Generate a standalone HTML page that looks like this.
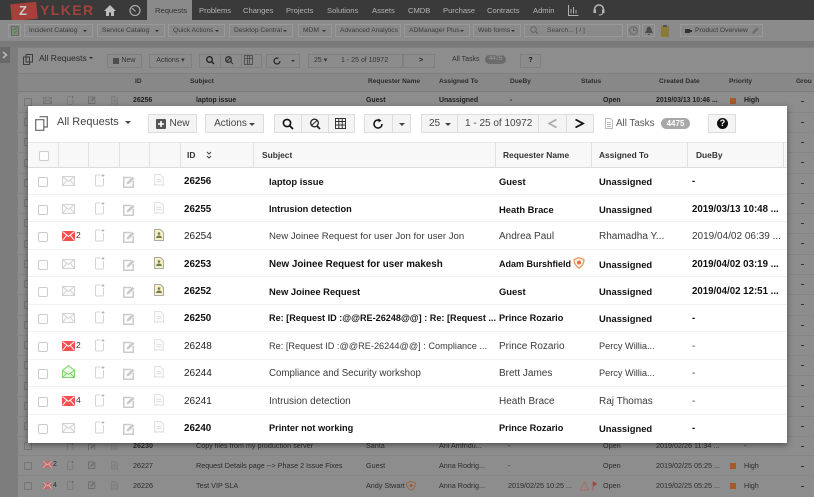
<!DOCTYPE html>
<html><head><meta charset="utf-8"><style>
html,body{margin:0;padding:0;width:814px;height:497px;overflow:hidden;background:#7d7d7d}
body{font-family:"Liberation Sans",sans-serif;position:relative;filter:blur(.3px)}
div,span,svg{position:absolute;white-space:nowrap;box-sizing:border-box}
.n{top:5px;font-size:7.6px;color:#b4b4b4;line-height:11px}
.tb{top:24px;height:13px;border:1px solid #999;background:#8a8a8a;font-size:6.7px;color:#3a3a3a;line-height:11px;padding-left:4px}
.tb i{position:absolute;right:5px;top:5px;border:2px solid transparent;border-top:2px solid #333;border-bottom:0}
.bb{top:54px;height:14px;border:1px solid #7f7f7f;background:#8c8c8c;font-size:7px;color:#333;line-height:12px;text-align:center}
.bh{top:77px;font-size:6.6px;font-weight:bold;color:#2c2c2c;line-height:10px}
.bt{font-size:7.2px;color:#2c2c2c;line-height:10px}
.bb2{font-size:6.9px;font-weight:bold;color:#1f1f1f;line-height:10px}
.b{background:#f4f4f4;border:1px solid #ddd;height:19px;top:114px;font-size:10px;color:#444;line-height:17px;text-align:center}
.th{top:149px;font-size:8.4px;font-weight:bold;color:#333;line-height:12px}
.r{left:28px;width:759px;height:27.5px;border-bottom:1px solid #f1f1f1}
.r span{top:8px;font-size:10px;line-height:13px;color:#3a3a3a}
.r span.I{left:156px;color:#222}
.r span.S{left:241px}.r span.Q{left:471px}.r span.A{left:571px}.r span.D{left:664px}
.r span.N{left:48px;top:7px;font-size:8.5px;color:#333}
.r.B span{font-weight:bold;color:#111;font-size:9.4px}
.r.B span.I{font-size:9.8px}
.r.B span.D{font-size:9.7px}
.c{left:10px;top:10px;width:10px;height:10px;border:1px solid #ccc;border-radius:2px;background:#fff}
.e{left:34px;top:9px}.o{left:67px;top:7px}.p{left:95px;top:9px}.d{left:126px;top:7px}
.cb{width:8px;height:8px;border:1px solid #757575;border-radius:1px;left:24px}
.ln{left:17px;width:12px;height:1px;background:#858585}
.ln2{left:787px;width:27px;height:1px;background:#858585}
.ds{left:801px;width:3px;height:1px;background:#333}
.dv{width:1px;background:#e2e2e2}
.g{filter:brightness(.55)}
</style></head><body>
<svg width="0" height="0" style="left:0;top:0"><defs>
<g id="env"><rect x=".5" y=".5" width="12" height="9" fill="#fafafa" stroke="#d2d2d2"/><path d="M.5 .5L6.500 5.500 12.500 .5M.5 9.500L4.500 4.500M12.500 9.500L8.500 4.500" fill="none" stroke="#d2d2d2"/></g>
<g id="red"><rect x="0" y="0" width="13" height="10" fill="#f45050"/><path d="M.5 .5L6.500 5.500 12.500 .5M.5 9.500L4.500 4.500M12.500 9.500L8.500 4.500" fill="none" stroke="#fff"/></g>
<g id="grn"><path d="M.5 5.500L6.500 .5 12.500 5.500V12.500H.5Z" fill="#eaf8e4" stroke="#7fd16a"/><path d="M.5 5.500L6.500 9.500 12.500 5.500M.5 12.500L5 8M12.500 12.500L8 8" fill="none" stroke="#7fd16a"/></g>
<g id="not"><path d="M5.500 1H1.500Q.5 1 .5 2V11Q.5 12 1.500 12H7Q8.500 12 8.500 10.500V4" fill="none" stroke="#d4d4d4"/><path d="M8 0V3M6.500 1.500H9.500" stroke="#aaa" stroke-width=".8"/></g>
<g id="edt"><path d="M8 1.500H.8V11.200H10.200V5" fill="none" stroke="#cacaca" stroke-width="1.500"/><path d="M3.500 8.500L4.200 6 9.500 .7 11.500 2.700 6 8Z" fill="#cacaca"/></g>
<g id="doc"><path d="M.5 .5H6.500L9.500 3.500V11.500L8 10.500 6.500 11.500 5 10.500 3.500 11.500 2 10.500 .5 11.500Z" fill="#fbfbfb" stroke="#e2e2e2"/><path d="M2.500 5.500H7.500M2.500 7.500H7.500" stroke="#e2e2e2"/></g>
<g id="pdf"><path d="M.5 .5H6.500L9.500 3.500V11.500H.5Z" fill="#f7f0c0" stroke="#aaa"/><path d="M5 3.200A1.300 1.300 0 1 1 5 5.800A1.300 1.300 0 1 1 5 3.200ZM2 9Q2.500 6.500 5 6.500T8 9Z" fill="#6d7f58"/></g>
</defs></svg>

<!-- top nav -->
<div style="left:0;top:0;width:814px;height:20px;background:#3a3a3a"></div>
<div style="left:11px;top:3px;width:26px;height:17px;background:#a5403a;transform:rotate(-6deg)"></div>
<div style="left:19px;top:4px;font-size:13px;font-weight:bold;color:#c9c9c9;line-height:14px">Z</div>
<div style="left:40px;top:3px;font-size:14px;font-weight:bold;color:#a5403a;line-height:15px;letter-spacing:1.400px">YLKER</div>
<svg style="left:104px;top:5px" width="12" height="11" viewBox="0 0 12 11"><path d="M6 0L12 6H10V11H7V7.500H5V11H2V6H0Z" fill="#bdbdbd"/></svg>
<svg style="left:129px;top:5px" width="12" height="11" viewBox="0 0 12 11"><circle cx="6" cy="5.500" r="5" fill="none" stroke="#aaa" stroke-width="1.200"/><path d="M3 3L6.500 6.500" stroke="#aaa" stroke-width="1.200"/></svg>
<div style="left:147px;top:0;width:45px;height:21px;background:#8a8a8a"></div>
<div class="n" style="left:155px;color:#333">Requests</div>
<div class="n" style="left:199px">Problems</div>
<div class="n" style="left:243px">Changes</div>
<div class="n" style="left:286px">Projects</div>
<div class="n" style="left:327px">Solutions</div>
<div class="n" style="left:372px">Assets</div>
<div class="n" style="left:408px">CMDB</div>
<div class="n" style="left:443px">Purchase</div>
<div class="n" style="left:487px">Contracts</div>
<div class="n" style="left:533px">Admin</div>
<svg style="left:568px;top:5px" width="11" height="11" viewBox="0 0 11 11"><path d="M.5 0V10.500H10.500M3 4V8.500M5.500 2V8.500M8 5V8.500" fill="none" stroke="#b0b0b0"/></svg>
<svg style="left:593px;top:4px" width="12" height="12" viewBox="0 0 12 12"><path d="M1.500 7V5.500A4.500 4.500 0 0 1 10.500 5.500V7" fill="none" stroke="#b5b5b5" stroke-width="1.500"/><rect x="0.500" y="5.500" width="2.500" height="3.500" fill="#b5b5b5"/><rect x="9" y="5.500" width="2.500" height="3.500" fill="#b5b5b5"/><path d="M10 9Q9 11 6 11" fill="none" stroke="#b5b5b5"/></svg>

<!-- toolbar -->
<div style="left:0;top:20px;width:814px;height:21px;background:#8b8b8b"></div>
<div style="left:0;top:41px;width:814px;height:6px;background:#7a7a7a"></div>
<div class="tb" style="left:8px;width:13px"></div>
<svg style="left:11px;top:26px" width="8" height="10" viewBox="0 0 8 10"><path d="M.5 .5H7.500V9.500H.5Z" fill="#7d8a78" stroke="#6a6a6a"/><path d="M2 4L6 2M3 7L6 5" stroke="#4f7a4a"/></svg>
<div class="tb" style="left:24px;width:69px">Incident Catalog<i></i></div>
<div class="tb" style="left:97px;width:68px">Service Catalog<i></i></div>
<div class="tb" style="left:168px;width:57px">Quick Actions<i></i></div>
<div class="tb" style="left:229px;width:64px">Desktop Central<i></i></div>
<div class="tb" style="left:298px;width:34px">MDM<i></i></div>
<div class="tb" style="left:335px;width:66px">Advanced Analytics</div>
<div class="tb" style="left:404px;width:66px">ADManager Plus<i></i></div>
<div class="tb" style="left:473px;width:48px">Web forms<i></i></div>
<div class="tb" style="left:524px;width:99px;padding-left:22px;color:#444">Search... [ / ]</div>
<svg style="left:530px;top:26px" width="9" height="9" viewBox="0 0 9 9"><circle cx="3.500" cy="3.500" r="2.800" fill="none" stroke="#666"/><path d="M5.500 5.500L8 8" stroke="#666"/></svg>
<div class="tb" style="left:627px;width:13px"></div><div class="tb" style="left:642px;width:13px"></div>
<svg style="left:629px;top:26px" width="9" height="9" viewBox="0 0 9 9"><circle cx="4.500" cy="4.500" r="3.800" fill="none" stroke="#666"/><path d="M4.500 2V4.500H7" stroke="#666" fill="none"/></svg>
<svg style="left:645px;top:26px" width="8" height="9" viewBox="0 0 8 9"><path d="M4 .5Q6.500 1 6.500 4L8 7H0L1.500 4Q1.500 1 4 .5ZM3 8H5V9H3Z" fill="#4c4c4c"/></svg>
<svg style="left:661px;top:25px" width="8" height="12" viewBox="0 0 8 12"><rect width="8" height="11" y="1" fill="#8a7a3c"/><rect x="2" width="4" height="2" fill="#555"/></svg>
<div class="tb" style="left:680px;width:83px;padding-left:14px">Product Overview</div>
<div style="left:685px;top:29px;width:5px;height:4px;background:#333"></div>
<div style="left:690px;top:30px;width:2px;height:2px;background:#333"></div>
<svg style="left:752px;top:27px" width="7" height="7" viewBox="0 0 7 7"><path d="M0 7L1 4.500 5 .5 6.500 2 2.500 6Z" fill="#6a6a6a"/></svg>

<!-- background panel -->
<div style="left:0;top:47px;width:10px;height:16px;background:#696969"></div>
<svg style="left:2px;top:51px" width="6" height="8" viewBox="0 0 6 8"><path d="M1 1L4.500 4 1 7" fill="none" stroke="#bbb" stroke-width="1.500"/></svg>
<div style="left:17px;top:47px;width:797px;height:450px;background:#8d8d8d;border-left:1px solid #7f7f7f;border-top:1px solid #7f7f7f"></div>
<div style="left:18px;top:73px;width:796px;height:19px;background:#888;border-top:1px solid #7f7f7f;border-bottom:1px solid #7b7b7b"></div>
<svg style="left:23px;top:54px" width="10" height="11" viewBox="0 0 10 11"><path d="M3 .5H9.500V8H3ZM.5 3H6.500V10.500H.5Z" fill="none" stroke="#3f3f3f"/></svg>
<div style="left:39px;top:53px;font-size:8.500px;color:#2a2a2a;line-height:11px">All Requests</div>
<div style="left:89px;top:57px;border:2px solid transparent;border-top:2px solid #2a2a2a"></div>
<div class="bb" style="left:107px;width:35px;padding-left:8px">New</div>
<div style="left:113px;top:58px;width:6px;height:6px;background:#4e4e4e"></div>
<div class="bb" style="left:149px;width:43px">Actions ▾</div>
<div class="bb" style="left:199px;width:63px"></div>
<div class="dv" style="left:220px;top:54px;height:14px;background:#7f7f7f"></div><div class="dv" style="left:241px;top:54px;height:14px;background:#7f7f7f"></div>
<svg style="left:205px;top:55px" width="50" height="12" viewBox="0 0 50 12"><circle cx="4.500" cy="4.500" r="2.800" fill="none" stroke="#222" stroke-width="1.300"/><path d="M6.500 6.500L9 9" stroke="#222" stroke-width="1.300"/><circle cx="23.500" cy="4.500" r="2.800" fill="none" stroke="#333" stroke-width="1.300"/><path d="M25.500 6.500L28 9M21 7L26 2" stroke="#333"/><path d="M39.500 .5H47.500V9.500H39.500ZM39.500 3.500H47.500M42.500 .5V9.500M44.500 .5V9.500" fill="none" stroke="#444" stroke-width=".8"/></svg>
<div class="bb" style="left:266px;width:34px"></div>
<svg style="left:272px;top:56px" width="10" height="10" viewBox="0 0 10 10"><path d="M8 5A3 3 0 1 1 6.500 2.400" fill="none" stroke="#222" stroke-width="1.200"/></svg>
<div style="left:291px;top:60px;border:2px solid transparent;border-top:2px solid #333"></div>
<div class="bb" style="left:308px;width:95px;text-align:left;padding-left:5px">25 ▾ <span style="left:32px;top:0">1 - 25 of 10972</span></div>
<div class="bb" style="left:403px;width:32px;color:#222"><span style="left:15px;top:0;font-weight:bold">&gt;</span></div>
<div style="left:452px;top:54px;font-size:7px;color:#333;line-height:12px">All Tasks</div>
<div style="left:485px;top:55px;width:21px;height:9px;background:#6b6b6b;border-radius:5px;font-size:6px;color:#a0a0a0;text-align:center;line-height:9px">4475</div>
<div class="bb" style="left:520px;width:21px;font-weight:bold;color:#111">?</div>
<div class="bh" style="left:135px">ID</div><div class="bh" style="left:190px">Subject</div>
<div class="bh" style="left:368px">Requester Name</div>
<div class="bh" style="left:439px">Assigned To</div><div class="bh" style="left:510px">DueBy</div>
<div class="bh" style="left:581px">Status</div><div class="bh" style="left:659px">Created Date</div>
<div class="bh" style="left:729px">Priority</div><div class="bh" style="left:796px">Grou</div>

<svg class="g" style="left:43px;top:97px" width="9" height="7" viewBox="0 0 13 10"><use href="#env"/></svg>
<svg class="g" style="left:67px;top:96px" width="7" height="9" viewBox="0 0 10 13"><use href="#not"/></svg>
<svg class="g" style="left:88px;top:96px" width="8" height="8" viewBox="0 0 12 12"><use href="#edt"/></svg>
<svg class="g" style="left:111px;top:96px" width="7" height="9" viewBox="0 0 10 12"><use href="#doc"/></svg>
<div class="bb2" style="left:133px;top:96px">26256</div>
<div class="bb2" style="left:196px;top:96px">laptop issue</div>
<div class="bb2" style="left:366px;top:96px">Guest</div>
<div class="bb2" style="left:439px;top:96px">Unassigned</div>
<div class="bb2" style="left:510px;top:96px">-</div>
<div class="bb2" style="left:603px;top:96px">Open</div>
<div class="bb2" style="left:656px;top:96px">2019/03/13 10:46 ...</div>
<div style="left:730px;top:98px;width:6px;height:6px;background:#a85a26"></div>
<div class="bb2" style="left:744px;top:96px">High</div>

<svg class="g" style="left:67px;top:443px" width="7" height="7" viewBox="0 0 10 10"><use href="#not"/></svg>
<svg class="g" style="left:88px;top:443px" width="8" height="7" viewBox="0 0 12 10"><use href="#edt"/></svg>
<svg class="g" style="left:111px;top:443px" width="7" height="7" viewBox="0 0 10 10"><use href="#doc"/></svg>
<div class="bt" style="left:133px;top:441px;font-weight:bold">26230</div>
<div class="bt" style="left:196px;top:441px">Copy files from my production server</div>
<div class="bt" style="left:366px;top:441px">Santa</div>
<div class="bt" style="left:439px;top:441px">Ani Amfridu...</div>
<div class="bt" style="left:508px;top:441px">-</div>
<div class="bt" style="left:603px;top:441px">Open</div>
<div class="bt" style="left:656px;top:441px">2019/02/26 11:34 ...</div>
<div class="bt" style="left:744px;top:441px">-</div>

<svg style="left:43px;top:461px" width="9" height="7" viewBox="0 0 13 10"><use href="#red" opacity=".55"/></svg>
<div class="bt" style="left:53px;top:460px;font-size:7px">2</div>
<svg class="g" style="left:67px;top:461px" width="7" height="9" viewBox="0 0 10 13"><use href="#not"/></svg>
<svg class="g" style="left:88px;top:461px" width="8" height="8" viewBox="0 0 12 12"><use href="#edt"/></svg>
<svg class="g" style="left:111px;top:461px" width="7" height="9" viewBox="0 0 10 12"><use href="#doc"/></svg>
<div class="bt" style="left:133px;top:461px">26227</div>
<div class="bt" style="left:196px;top:461px">Request Details page --&gt; Phase 2 Issue Fixes</div>
<div class="bt" style="left:366px;top:461px">Guest</div>
<div class="bt" style="left:439px;top:461px">Anna Rodrig...</div>
<div class="bt" style="left:508px;top:461px">-</div>
<div class="bt" style="left:603px;top:461px">Open</div>
<div class="bt" style="left:656px;top:461px">2019/02/25 05:25 ...</div>
<div style="left:730px;top:463px;width:6px;height:6px;background:#a85a26"></div>
<div class="bt" style="left:744px;top:461px">High</div>

<svg style="left:43px;top:482px" width="9" height="7" viewBox="0 0 13 10"><use href="#red" opacity=".55"/></svg>
<div class="bt" style="left:53px;top:481px;font-size:7px">4</div>
<svg class="g" style="left:67px;top:481px" width="7" height="9" viewBox="0 0 10 13"><use href="#not"/></svg>
<svg class="g" style="left:88px;top:481px" width="8" height="8" viewBox="0 0 12 12"><use href="#edt"/></svg>
<svg class="g" style="left:111px;top:481px" width="7" height="9" viewBox="0 0 10 12"><use href="#doc"/></svg>
<div class="bt" style="left:133px;top:481px">26226</div>
<div class="bt" style="left:196px;top:481px">Test VIP SLA</div>
<div class="bt" style="left:366px;top:481px">Andy Stwart</div>
<svg style="left:406px;top:481px" width="10" height="10" viewBox="0 0 10 10"><path d="M5 .5L9.500 2Q9.500 7 5 9.500Q.5 7 .5 2Z" fill="none" stroke="#9a6a4a"/><circle cx="5" cy="4.500" r="1.500" fill="#a85a26"/></svg>
<div class="bt" style="left:439px;top:481px">Anna Rodrig...</div>
<div class="bt" style="left:508px;top:481px">2019/02/25 10:25 ...</div>
<svg style="left:580px;top:481px" width="18" height="10" viewBox="0 0 18 10"><path d="M4.500 1L8.500 9H.5Z" fill="none" stroke="#a87060"/><path d="M13 0V10M13.500 1L17 3 13.500 5Z" fill="#a5403a" stroke="#a5403a" stroke-width=".5"/></svg>
<div class="bt" style="left:603px;top:481px">Open</div>
<div class="bt" style="left:656px;top:481px">2019/02/25 05:25 ...</div>
<div style="left:730px;top:483px;width:6px;height:6px;background:#a85a26"></div>
<div class="bt" style="left:744px;top:481px">High</div>

<!-- edges of background rows -->
<div class="ln" style="top:112px"></div><div class="ln" style="top:132px"></div><div class="ln" style="top:152px"></div><div class="ln" style="top:173px"></div><div class="ln" style="top:193px"></div><div class="ln" style="top:213px"></div><div class="ln" style="top:233px"></div><div class="ln" style="top:254px"></div><div class="ln" style="top:274px"></div><div class="ln" style="top:294px"></div><div class="ln" style="top:315px"></div><div class="ln" style="top:335px"></div><div class="ln" style="top:355px"></div><div class="ln" style="top:375px"></div><div class="ln" style="top:396px"></div><div class="ln" style="top:416px"></div><div class="ln" style="top:436px"></div>
<div style="left:17px;top:455px;width:797px;height:1px;background:#858585"></div>
<div style="left:17px;top:475px;width:797px;height:1px;background:#858585"></div>
<div class="ln2" style="top:112px"></div><div class="ln2" style="top:132px"></div><div class="ln2" style="top:152px"></div><div class="ln2" style="top:173px"></div><div class="ln2" style="top:193px"></div><div class="ln2" style="top:213px"></div><div class="ln2" style="top:233px"></div><div class="ln2" style="top:254px"></div><div class="ln2" style="top:274px"></div><div class="ln2" style="top:294px"></div><div class="ln2" style="top:315px"></div><div class="ln2" style="top:335px"></div><div class="ln2" style="top:355px"></div><div class="ln2" style="top:375px"></div><div class="ln2" style="top:396px"></div><div class="ln2" style="top:416px"></div><div class="ln2" style="top:436px"></div>
<div class="ds" style="top:122px"></div><div class="ds" style="top:142px"></div><div class="ds" style="top:162px"></div><div class="ds" style="top:183px"></div><div class="ds" style="top:203px"></div><div class="ds" style="top:223px"></div><div class="ds" style="top:243px"></div><div class="ds" style="top:264px"></div><div class="ds" style="top:284px"></div><div class="ds" style="top:304px"></div><div class="ds" style="top:325px"></div><div class="ds" style="top:345px"></div><div class="ds" style="top:365px"></div><div class="ds" style="top:385px"></div><div class="ds" style="top:406px"></div><div class="ds" style="top:426px"></div><div class="ds" style="top:446px"></div><div class="ds" style="top:466px"></div><div class="ds" style="top:486px"></div><div class="ds" style="top:101px"></div>
<div class="cb" style="top:98px"></div><div class="cb" style="top:118px"></div><div class="cb" style="top:138px"></div><div class="cb" style="top:159px"></div><div class="cb" style="top:179px"></div><div class="cb" style="top:199px"></div><div class="cb" style="top:219px"></div><div class="cb" style="top:240px"></div><div class="cb" style="top:260px"></div><div class="cb" style="top:280px"></div><div class="cb" style="top:301px"></div><div class="cb" style="top:321px"></div><div class="cb" style="top:341px"></div><div class="cb" style="top:361px"></div><div class="cb" style="top:382px"></div><div class="cb" style="top:402px"></div><div class="cb" style="top:422px"></div><div class="cb" style="top:442px"></div><div class="cb" style="top:462px"></div><div class="cb" style="top:482px"></div>

<!-- modal -->
<div style="left:28px;top:106px;width:759px;height:337px;background:#fff;box-shadow:0 2px 6px rgba(0,0,0,.45)"></div>
<svg style="left:35px;top:116px" width="13" height="15" viewBox="0 0 13 15"><path d="M4.500 .7H12.300V11H9M.7 3.700H8.800V14.300H.7Z" fill="none" stroke="#666" stroke-width="1.200"/></svg>
<div style="left:57px;top:115px;font-size:11px;color:#444;line-height:14px">All Requests</div>
<div style="left:125px;top:121px;border:3px solid transparent;border-top:3px solid #444;border-bottom:0"></div>
<div class="b" style="left:148px;width:49px;padding-left:14px">New</div>
<svg style="left:156px;top:119px" width="10" height="10" viewBox="0 0 10 10"><rect width="10" height="10" rx="1" fill="#555"/><path d="M5 2V8M2 5H8" stroke="#fff" stroke-width="1.600"/></svg>
<div class="b" style="left:205px;width:59px;padding-right:8px">Actions</div>
<div style="left:249px;top:123px;border:3px solid transparent;border-top:3px solid #444;border-bottom:0"></div>
<div class="b" style="left:274px;width:81px"></div>
<div class="dv" style="left:301px;top:114px;height:19px;background:#ddd"></div><div class="dv" style="left:328px;top:114px;height:19px;background:#ddd"></div>
<svg style="left:282px;top:118px" width="12" height="12" viewBox="0 0 12 12"><circle cx="5" cy="5" r="3.600" fill="none" stroke="#111" stroke-width="1.600"/><path d="M7.500 7.500L11 11" stroke="#111" stroke-width="1.800"/></svg>
<svg style="left:309px;top:118px" width="12" height="12" viewBox="0 0 12 12"><circle cx="5.500" cy="5" r="3.800" fill="none" stroke="#222" stroke-width="1.300"/><path d="M8 8L11 11" stroke="#222" stroke-width="1.800"/><path d="M2 8L8 2.500" stroke="#222" stroke-width="1"/></svg>
<svg style="left:335px;top:118px" width="12" height="12" viewBox="0 0 12 12"><path d="M.5 .5H10.500V10.500H.5ZM.5 3.500H10.500M.5 7H10.500M3.800 .5V10.500M7.200 .5V10.500" fill="none" stroke="#333"/></svg>
<div class="b" style="left:364px;width:47px"></div>
<div class="dv" style="left:392px;top:114px;height:19px;background:#ddd"></div>
<svg style="left:372px;top:118px" width="12" height="12" viewBox="0 0 12 12"><path d="M10 6A4 4 0 1 1 7.500 2.300" fill="none" stroke="#111" stroke-width="1.500"/><path d="M6.500 .5L9.500 2.500 6.500 4.500Z" fill="#111"/></svg>
<div style="left:399px;top:123px;border:3px solid transparent;border-top:3px solid #444;border-bottom:0"></div>
<div class="b" style="left:421px;width:173px"></div>
<div class="dv" style="left:457px;top:114px;height:19px;background:#ddd"></div><div class="dv" style="left:538px;top:114px;height:19px;background:#ddd"></div><div class="dv" style="left:566px;top:114px;height:19px;background:#ddd"></div>
<div style="left:429px;top:117px;font-size:10px;line-height:13px;color:#444">25</div>
<div style="left:445px;top:123px;border:3px solid transparent;border-top:3px solid #444;border-bottom:0"></div>
<div style="left:465px;top:117px;font-size:10px;line-height:13px;color:#444">1 - 25 of 10972</div>
<svg style="left:547px;top:118px" width="11" height="11" viewBox="0 0 11 11"><path d="M9.500 1.500L2 5.500 9.500 9.500" fill="none" stroke="#aaa" stroke-width="1.600"/></svg>
<svg style="left:574px;top:118px" width="11" height="11" viewBox="0 0 11 11"><path d="M1.500 1.500L9 5.500 1.500 9.500" fill="none" stroke="#111" stroke-width="1.800"/></svg>
<svg style="left:605px;top:118px" width="8" height="11" viewBox="0 0 8 11"><path d="M.5 .5H5.500L7.500 2.500V10.500H.5ZM2 4.500H6M2 6.500H6M2 8.500H6" fill="none" stroke="#bbb"/></svg>
<div style="left:616px;top:117px;font-size:9.800px;line-height:13px;color:#555">All Tasks</div>
<div style="left:661px;top:118px;width:29px;height:11px;background:#a8a8a8;border-radius:6px;font-size:8px;font-weight:bold;color:#fff;text-align:center;line-height:11px">4475</div>
<div class="b" style="left:708px;width:28px"></div>
<div style="left:717px;top:118px;width:11px;height:11px;background:#111;border-radius:50%;color:#fff;font-size:9px;font-weight:bold;text-align:center;line-height:11px">?</div>

<div style="left:28px;top:142px;width:759px;height:26px;background:#f8f8f8;border-top:1px solid #e8e8e8;border-bottom:1px solid #ddd"></div>
<div class="dv" style="left:58px;top:142px;height:25px"></div><div class="dv" style="left:88px;top:142px;height:25px"></div><div class="dv" style="left:119px;top:142px;height:25px"></div><div class="dv" style="left:149px;top:142px;height:25px"></div><div class="dv" style="left:180px;top:142px;height:25px"></div><div class="dv" style="left:253px;top:142px;height:25px"></div><div class="dv" style="left:495px;top:142px;height:25px"></div><div class="dv" style="left:591px;top:142px;height:25px"></div><div class="dv" style="left:687px;top:142px;height:25px"></div><div class="dv" style="left:783px;top:142px;height:25px"></div>
<div style="left:39px;top:151px;width:10px;height:10px;border:1px solid #ccc;border-radius:2px;background:#fff"></div>
<div class="th" style="left:187px">ID</div>
<svg style="left:206px;top:151px" width="6" height="8" viewBox="0 0 6 8"><path d="M1 1L3 3 5 1M1 5L3 7 5 5" fill="none" stroke="#444"/></svg>
<div class="th" style="left:262px">Subject</div>
<div class="th" style="left:503px">Requester Name</div>
<div class="th" style="left:599px">Assigned To</div>
<div class="th" style="left:696px">DueBy</div>

<div class="r B" style="top:167px"><div class="c"></div><svg class="e" width="13" height="10"><use href="#env"/></svg><svg class="o" width="10" height="13"><use href="#not"/></svg><svg class="p" width="12" height="12"><use href="#edt"/></svg><svg class="d" width="10" height="12"><use href="#doc"/></svg><span class="I">26256</span><span class="S">laptop issue</span><span class="Q">Guest</span><span class="A">Unassigned</span><span class="D">-</span></div>
<div class="r B" style="top:194.500px"><div class="c"></div><svg class="e" width="13" height="10"><use href="#env"/></svg><svg class="o" width="10" height="13"><use href="#not"/></svg><svg class="p" width="12" height="12"><use href="#edt"/></svg><svg class="d" width="10" height="12"><use href="#doc"/></svg><span class="I">26255</span><span class="S" style="font-size:9.200px">Intrusion detection</span><span class="Q">Heath Brace</span><span class="A">Unassigned</span><span class="D">2019/03/13 10:48 ...</span></div>
<div class="r" style="top:222px"><div class="c"></div><svg class="e" width="13" height="10"><use href="#red"/></svg><span class="N">2</span><svg class="o" width="10" height="13"><use href="#not"/></svg><svg class="p" width="12" height="12"><use href="#edt"/></svg><svg class="d" width="10" height="12"><use href="#pdf"/></svg><span class="I">26254</span><span class="S" style="font-size:9.600px">New Joinee Request for user Jon for user Jon</span><span class="Q">Andrea Paul</span><span class="A">Rhamadha Y...</span><span class="D">2019/04/02 06:39 ...</span></div>
<div class="r B" style="top:249.500px"><div class="c"></div><svg class="e" width="13" height="10"><use href="#env"/></svg><svg class="o" width="10" height="13"><use href="#not"/></svg><svg class="p" width="12" height="12"><use href="#edt"/></svg><svg class="d" width="10" height="12"><use href="#pdf"/></svg><span class="I">26253</span><span class="S" style="font-size:9.800px">New Joinee Request for user makesh</span><span class="Q" style="font-size:9px">Adam Burshfield</span><svg style="left:545px;top:7px" width="12" height="12" viewBox="0 0 12 12"><path d="M6 .7L11 2.500Q11 8 6 11.300Q1 8 1 2.500Z" fill="#fdf3ea" stroke="#e8935a" stroke-width="1.200"/><circle cx="6" cy="5.500" r="2" fill="#e8703a"/></svg><span class="A">Unassigned</span><span class="D">2019/04/02 03:19 ...</span></div>
<div class="r B" style="top:277px"><div class="c"></div><svg class="e" width="13" height="10"><use href="#env"/></svg><svg class="o" width="10" height="13"><use href="#not"/></svg><svg class="p" width="12" height="12"><use href="#edt"/></svg><svg class="d" width="10" height="12"><use href="#pdf"/></svg><span class="I">26252</span><span class="S">New Joinee Request</span><span class="Q">Guest</span><span class="A">Unassigned</span><span class="D">2019/04/02 12:51 ...</span></div>
<div class="r B" style="top:304px"><div class="c"></div><svg class="e" width="13" height="10"><use href="#env"/></svg><svg class="o" width="10" height="13"><use href="#not"/></svg><svg class="p" width="12" height="12"><use href="#edt"/></svg><svg class="d" width="10" height="12"><use href="#doc"/></svg><span class="I">26250</span><span class="S" style="font-size:9.100px">Re: [Request ID :@@RE-26248@@] : Re: [Request ...</span><span class="Q" style="font-size:9.200px">Prince Rozario</span><span class="A">Unassigned</span><span class="D">-</span></div>
<div class="r" style="top:332px"><div class="c"></div><svg class="e" width="13" height="10"><use href="#red"/></svg><span class="N">2</span><svg class="o" width="10" height="13"><use href="#not"/></svg><svg class="p" width="12" height="12"><use href="#edt"/></svg><svg class="d" width="10" height="12"><use href="#doc"/></svg><span class="I">26248</span><span class="S" style="font-size:9.200px">Re: [Request ID :@@RE-26244@@] : Compliance ...</span><span class="Q">Prince Rozario</span><span class="A" style="font-size:9.200px">Percy Willia...</span><span class="D">-</span></div>
<div class="r" style="top:359px"><div class="c"></div><svg class="e" style="top:6px" width="13" height="13"><use href="#grn"/></svg><svg class="o" width="10" height="13"><use href="#not"/></svg><svg class="p" width="12" height="12"><use href="#edt"/></svg><svg class="d" width="10" height="12"><use href="#doc"/></svg><span class="I">26244</span><span class="S" style="font-size:9.700px">Compliance and Security workshop</span><span class="Q">Brett James</span><span class="A" style="font-size:9.200px">Percy Willia...</span><span class="D">-</span></div>
<div class="r" style="top:387px"><div class="c"></div><svg class="e" width="13" height="10"><use href="#red"/></svg><span class="N">4</span><svg class="o" width="10" height="13"><use href="#not"/></svg><svg class="p" width="12" height="12"><use href="#edt"/></svg><svg class="d" width="10" height="12"><use href="#doc"/></svg><span class="I">26241</span><span class="S">Intrusion detection</span><span class="Q">Heath Brace</span><span class="A">Raj Thomas</span><span class="D">-</span></div>
<div class="r B" style="top:414px;border:0"><div class="c"></div><svg class="e" width="13" height="10"><use href="#env"/></svg><svg class="o" width="10" height="13"><use href="#not"/></svg><svg class="p" width="12" height="12"><use href="#edt"/></svg><svg class="d" width="10" height="12"><use href="#doc"/></svg><span class="I">26240</span><span class="S" style="font-size:9.200px">Printer not working</span><span class="Q" style="font-size:9.200px">Prince Rozario</span><span class="A">Unassigned</span><span class="D">-</span></div>
</body></html>
